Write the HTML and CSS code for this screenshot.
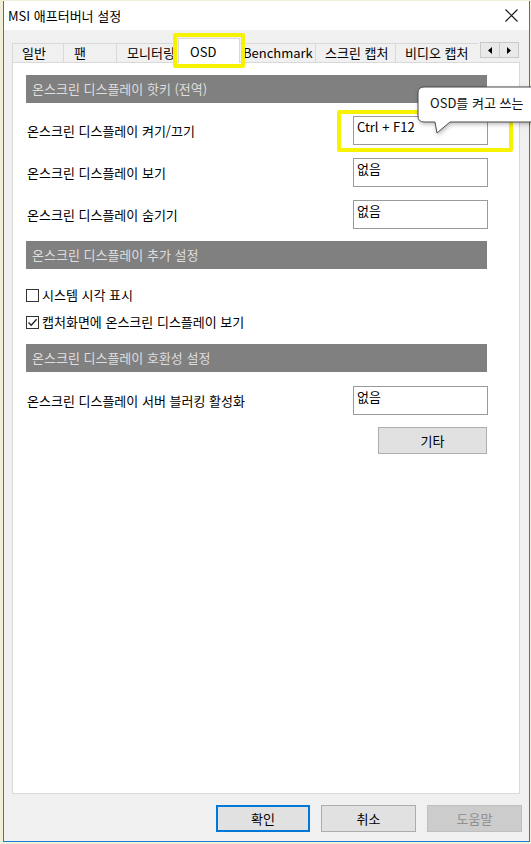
FILE: index.html
```html
<!DOCTYPE html>
<html lang="ko">
<head>
<meta charset="utf-8">
<title>MSI 애프터버너 설정</title>
<link rel="stylesheet" href="styles.css">
</head>
<body>
<div class="window">
  <div class="titlebar">
    <span class="title">MSI 애프터버너 설정</span>
    <svg class="close" width="13" height="13" viewBox="0 0 13 13"><path d="M0.5 0.5 L12.5 12.5 M12.5 0.5 L0.5 12.5" stroke="#111" stroke-width="1.1" fill="none"/></svg>
  </div>
  <div class="body">
    <div class="tabstrip">
      <div class="tabs">
        <div class="tab t1">일반</div>
        <div class="tab t2">팬</div>
        <div class="tab t3">모니터링</div>
        <div class="tab t4 selected">OSD</div>
        <div class="tab t5">Benchmark</div>
        <div class="tab t6">스크린 캡처</div>
        <div class="tab t7">비디오 캡처</div>
      </div>
      <div class="arrows">
        <div class="arrow"><svg width="6" height="7" viewBox="0 0 6 7"><path d="M5 0 L1 3.5 L5 7 Z" fill="#000"/></svg></div>
        <div class="arrow"><svg width="6" height="7" viewBox="0 0 6 7"><path d="M1 0 L5 3.5 L1 7 Z" fill="#000"/></svg></div>
      </div>
    </div>
    <div class="panel">
      <div class="content">
        <div class="header">온스크린 디스플레이 핫키 (전역)</div>
        <div class="row r1"><span class="label">온스크린 디스플레이 켜기/끄기</span><div class="field">Ctrl + F12</div></div>
        <div class="row r2"><span class="label">온스크린 디스플레이 보기</span><div class="field">없음</div></div>
        <div class="row r2"><span class="label">온스크린 디스플레이 숨기기</span><div class="field">없음</div></div>
        <div class="header h2">온스크린 디스플레이 추가 설정</div>
        <div class="check c1"><span class="box"></span><span class="label">시스템 시각 표시</span></div>
        <div class="check c2"><span class="box"><svg width="11" height="11" viewBox="0 0 11 11"><path d="M1.5 5.5 L4.2 8.3 L9.6 2.2" stroke="#222" stroke-width="1.3" fill="none"/></svg></span><span class="label">캡처화면에 온스크린 디스플레이 보기</span></div>
        <div class="header h3">온스크린 디스플레이 호환성 설정</div>
        <div class="row r4"><span class="label">온스크린 디스플레이 서버 블러킹 활성화</span><div class="field">없음</div></div>
        <div class="btnrow"><div class="btn etc">기타</div></div>
      </div>
    </div>
    <div class="footer">
      <div class="btn default">확인</div>
      <div class="btn">취소</div>
      <div class="btn disabled">도움말</div>
    </div>
  </div>
</div>

<div class="hl hl-tab"></div>
<div class="hl hl-field"></div>

<svg class="tooltip" width="130" height="52" viewBox="0 0 130 52">
  <path d="M8 2 H140 V37 H34 L21 48 L19 37 H8 Q2 37 2 31 V8 Q2 2 8 2 Z" fill="#fff" stroke="#4a4a4a" stroke-width="1"/>
</svg>
<div class="tip-clip"><div class="tip-text">OSD를 켜고 쓰는</div></div>
</body>
</html>
```
FILE: styles.css
```css
html, body {
  margin: 0;
  padding: 0;
}
body {
  width: 531px;
  height: 844px;
  overflow: hidden;
  background: #f2efd9;
  font-family: "Noto Sans CJK KR", "Noto Sans", sans-serif;
  font-size: 13px;
  color: #000;
}
.window {
  margin-left: 3px;
  margin-top: 1px;
  width: 527px;
  height: 841px;
  box-sizing: border-box;
  border-left: 1px solid #1a7fd4;
  border-right: 1px solid #1a7fd4;
  border-bottom: 1px solid #1a7fd4;
  display: flex;
  flex-direction: column;
  background: #f0f0f0;
}
.titlebar {
  height: 29px;
  background: #fff;
  display: flex;
  align-items: center;
  justify-content: space-between;
  padding-left: 4px;
  padding-right: 11px;
  flex: none;
}
.title {
  font-size: 13px;
  line-height: 16px;
  color: #000;
}
.close {
  display: block;
}
.body {
  flex: 1;
  display: flex;
  flex-direction: column;
}
.tabstrip {
  height: 25px;
  padding-top: 8px;
  padding-left: 8px;
  display: flex;
  flex: none;
}
.tabs {
  width: 466px;
  height: 25px;
  overflow: hidden;
  display: flex;
  align-items: flex-start;
  flex: none;
}
.tab {
  flex: none;
  box-sizing: border-box;
  height: 19px;
  margin-top: 5px;
  border-top: 1px solid #d9d9d9;
  border-left: 1px solid #d9d9d9;
  background: #f0f0f0;
  padding-left: 9px;
  font-size: 13px;
  line-height: 17px;
  white-space: nowrap;
  color: #000;
}
.t1 { width: 51px; padding-left: 9px; }
.t2 { width: 53px; padding-left: 10px; }
.t3 { width: 64px; padding-left: 10px; }
.t5 { width: 77px; padding-left: 5px; border-left: none; }
.t6 { width: 80px; padding-left: 9px; }
.t7 { width: 90px; padding-left: 9px; }
.tab.selected {
  position: relative;
  z-index: 2;
  width: 62px;
  height: 25px;
  margin-top: 0;
  margin-left: -2px;
  margin-right: -2px;
  background: #fff;
  border: 1px solid #d9d9d9;
  border-bottom: none;
  padding-left: 11px;
  line-height: 26px;
}
.arrows {
  display: flex;
  margin-left: 2px;
  margin-top: 4px;
  height: 16px;
}
.arrow {
  width: 20px;
  height: 16px;
  box-sizing: border-box;
  border: 1px solid #c9c9c9;
  background: #e9e9e9;
  display: flex;
  align-items: center;
  justify-content: center;
}
.arrow + .arrow {
  margin-left: -1px;
}
.panel {
  flex: none;
  margin-top: -1px;
  margin-left: 8px;
  width: 508px;
  height: 732px;
  box-sizing: border-box;
  border: 1px solid #d9d9d9;
  background: #fff;
  padding-top: 12px;
  padding-left: 13px;
}
.content {
  width: 462px;
  display: flex;
  flex-direction: column;
}
.header {
  height: 28px;
  background: #808080;
  color: #dedede;
  padding-left: 6px;
  line-height: 28px;
  font-size: 13px;
  margin-right: 1px;
}
.h2 { margin-top: 12px; }
.h3 { margin-top: 14px; }
.row {
  height: 29px;
  display: flex;
  align-items: center;
  justify-content: space-between;
}
.r1 { margin-top: 13px; }
.r2 { margin-top: 13px; }
.r4 { margin-top: 14px; }
.label {
  font-size: 13px;
  line-height: 16px;
  padding-left: 1px;
}
.field {
  width: 135px;
  height: 29px;
  box-sizing: border-box;
  border: 1px solid #9a9a9a;
  background: #fff;
  padding: 2px 0 0 3px;
  font-size: 13px;
  line-height: 16px;
}
.check {
  height: 16px;
  display: flex;
  align-items: center;
}
.c1 { margin-top: 18px; }
.c2 { margin-top: 11px; }
.box {
  width: 13px;
  height: 13px;
  box-sizing: border-box;
  border: 1px solid #333;
  background: #fff;
  margin-right: 3px;
  display: flex;
  align-items: center;
  justify-content: center;
  flex: none;
}
.box svg { display: block; }
.check .label { padding-left: 0; }
.btnrow {
  display: flex;
  justify-content: flex-end;
  margin-top: 12px;
  padding-right: 1px;
}
.btn {
  box-sizing: border-box;
  height: 27px;
  width: 95px;
  border: 1px solid #adadad;
  background: #e1e1e1;
  display: flex;
  align-items: center;
  justify-content: center;
  font-size: 13px;
  color: #000;
}
.btn.etc { width: 109px; }
.footer {
  display: flex;
  justify-content: flex-end;
  gap: 11px;
  padding-top: 11px;
  padding-right: 7px;
}
.btn.default {
  width: 94px;
  border: 2px solid #0078d7;
}
.btn.disabled {
  background: #cccccc;
  border-color: #bfbfbf;
  color: #8f8f8f;
}
.hl {
  position: absolute;
  box-sizing: border-box;
  border: 4px solid #f6f200;
  border-radius: 2px;
  z-index: 5;
}
.hl-tab {
  left: 173px;
  top: 33px;
  width: 72px;
  height: 35px;
}
.hl-field {
  left: 337px;
  top: 110px;
  width: 176px;
  height: 42px;
}
.tooltip {
  position: absolute;
  left: 416px;
  top: 85px;
  z-index: 6;
  filter: drop-shadow(1px 2px 2px rgba(0,0,0,0.25));
}
.tip-clip {
  position: absolute;
  left: 430px;
  top: 97px;
  width: 110px;
  height: 14px;
  overflow: hidden;
  z-index: 7;
}
.tip-text {
  margin-top: -3px;
  font-size: 13px;
  line-height: 17px;
  color: #111;
  white-space: nowrap;
}
```
